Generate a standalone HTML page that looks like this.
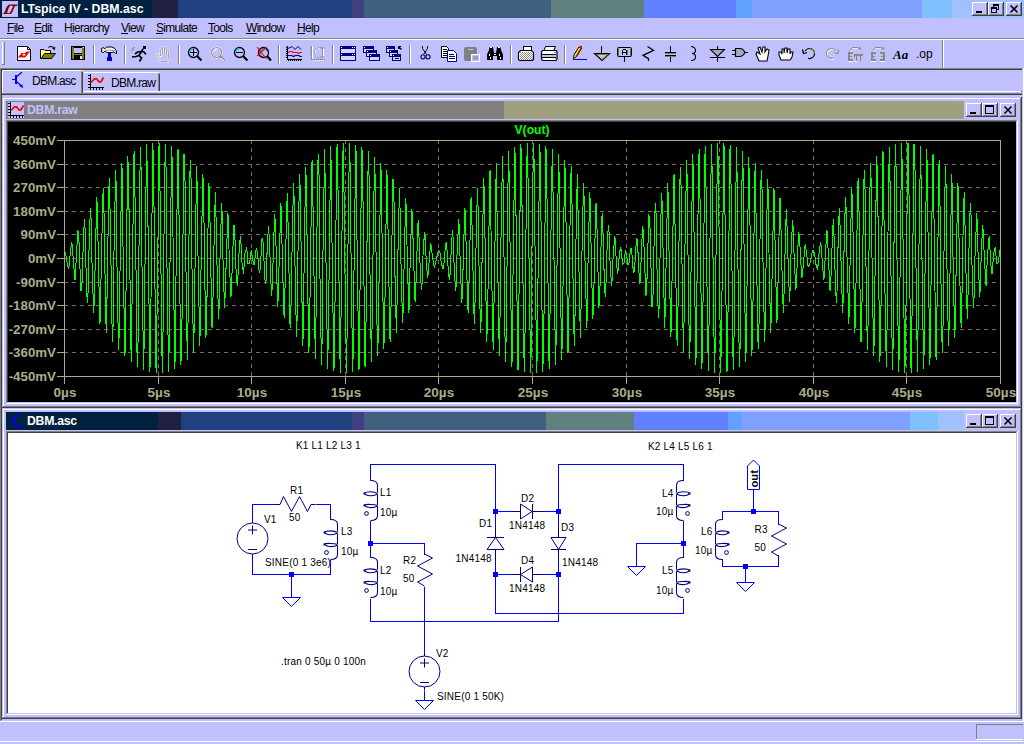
<!DOCTYPE html>
<html><head><meta charset="utf-8"><style>
html,body{margin:0;padding:0;}
body{width:1024px;height:744px;position:relative;overflow:hidden;background:#C0C0FF;font-family:"Liberation Sans",sans-serif;}
u{text-decoration:underline;text-underline-offset:1px;}
svg{overflow:visible}
</style></head><body>
<div style="position:absolute;left:0px;top:0px;width:152px;height:18px;background:#002040;"></div>
<div style="position:absolute;left:152px;top:0px;width:26px;height:18px;background:#202040;"></div>
<div style="position:absolute;left:178px;top:0px;width:174px;height:18px;background:#204080;"></div>
<div style="position:absolute;left:352px;top:0px;width:12px;height:18px;background:#404080;"></div>
<div style="position:absolute;left:364px;top:0px;width:187px;height:18px;background:#406080;"></div>
<div style="position:absolute;left:551px;top:0px;width:93px;height:18px;background:#608080;"></div>
<div style="position:absolute;left:644px;top:0px;width:92px;height:18px;background:#6080FF;"></div>
<div style="position:absolute;left:736px;top:0px;width:16px;height:18px;background:#60A0FF;"></div>
<div style="position:absolute;left:752px;top:0px;width:170px;height:18px;background:#80A0FF;"></div>
<div style="position:absolute;left:922px;top:0px;width:30px;height:18px;background:#80C0FF;"></div>
<div style="position:absolute;left:952px;top:0px;width:72px;height:18px;background:#A0C0FF;"></div>
<svg style="position:absolute;left:2px;top:1px" width="16" height="16" viewBox="0 0 16 16" ><rect x="0" y="0" width="16" height="16" fill="#C0C0FF"/><path d="M0.5 13 L6.5 13 L6.8 12 L5 12 Q6 8 7.5 5.5 Q8.3 4.3 9.8 4.3 L10.2 3.6 L7.6 3.6 Q6 3.6 5 5.5 Q3.6 8 2.2 12 Z" fill="#800000"/><path d="M9.8 3.6 L15.8 3.6 L15 5 L13 5 Q11.5 8.5 10.3 11 Q9.5 12.8 8.2 13 L6.5 13 L7 12.2 Q8.2 11.8 9 9.8 L11.2 5 L9.3 5 Z" fill="#800000"/></svg>
<div style="position:absolute;left:21px;top:3px;font:bold 12.3px/12.3px 'Liberation Sans', sans-serif;color:#FFF;white-space:nowrap;letter-spacing:0px;">LTspice IV - DBM.asc</div>
<div style="position:absolute;left:972px;top:2px;width:16px;height:14px;background:#C0C0FF;"></div>
<div style="position:absolute;left:972px;top:2px;width:15px;height:1px;background:#FFFFFF;"></div>
<div style="position:absolute;left:972px;top:2px;width:1px;height:13px;background:#FFFFFF;"></div>
<div style="position:absolute;left:972px;top:15px;width:16px;height:1px;background:#404040;"></div>
<div style="position:absolute;left:987px;top:2px;width:1px;height:14px;background:#404040;"></div>
<div style="position:absolute;left:973px;top:14px;width:14px;height:1px;background:#808080;"></div>
<div style="position:absolute;left:986px;top:3px;width:1px;height:12px;background:#808080;"></div>
<div style="position:absolute;left:976px;top:11px;width:6px;height:2px;background:#000;"></div>
<div style="position:absolute;left:988px;top:2px;width:16px;height:14px;background:#C0C0FF;"></div>
<div style="position:absolute;left:988px;top:2px;width:15px;height:1px;background:#FFFFFF;"></div>
<div style="position:absolute;left:988px;top:2px;width:1px;height:13px;background:#FFFFFF;"></div>
<div style="position:absolute;left:988px;top:15px;width:16px;height:1px;background:#404040;"></div>
<div style="position:absolute;left:1003px;top:2px;width:1px;height:14px;background:#404040;"></div>
<div style="position:absolute;left:989px;top:14px;width:14px;height:1px;background:#808080;"></div>
<div style="position:absolute;left:1002px;top:3px;width:1px;height:12px;background:#808080;"></div>
<div style="position:absolute;left:993px;top:4px;width:6px;height:6px;background:#000;"></div>
<div style="position:absolute;left:994px;top:6px;width:4px;height:3px;background:#C0C0FF;"></div>
<div style="position:absolute;left:991px;top:7px;width:6px;height:6px;background:#000;"></div>
<div style="position:absolute;left:992px;top:9px;width:4px;height:3px;background:#C0C0FF;"></div>
<div style="position:absolute;left:1006px;top:2px;width:16px;height:14px;background:#C0C0FF;"></div>
<div style="position:absolute;left:1006px;top:2px;width:15px;height:1px;background:#FFFFFF;"></div>
<div style="position:absolute;left:1006px;top:2px;width:1px;height:13px;background:#FFFFFF;"></div>
<div style="position:absolute;left:1006px;top:15px;width:16px;height:1px;background:#404040;"></div>
<div style="position:absolute;left:1021px;top:2px;width:1px;height:14px;background:#404040;"></div>
<div style="position:absolute;left:1007px;top:14px;width:14px;height:1px;background:#808080;"></div>
<div style="position:absolute;left:1020px;top:3px;width:1px;height:12px;background:#808080;"></div>
<svg style="position:absolute;left:1006px;top:2px" width="16" height="14"><path d="M4.5 3.5 L11.5 10.5 M11.5 3.5 L4.5 10.5" stroke="#000" stroke-width="1.6"/></svg>
<div style="position:absolute;left:7px;top:22px;font:normal 12px/12px 'Liberation Sans', sans-serif;color:#000;white-space:nowrap;letter-spacing:-0.7px;"><u>F</u>ile</div>
<div style="position:absolute;left:34px;top:22px;font:normal 12px/12px 'Liberation Sans', sans-serif;color:#000;white-space:nowrap;letter-spacing:-0.7px;"><u>E</u>dit</div>
<div style="position:absolute;left:64px;top:22px;font:normal 12px/12px 'Liberation Sans', sans-serif;color:#000;white-space:nowrap;letter-spacing:-0.7px;">H<u>i</u>erarchy</div>
<div style="position:absolute;left:121px;top:22px;font:normal 12px/12px 'Liberation Sans', sans-serif;color:#000;white-space:nowrap;letter-spacing:-0.7px;"><u>V</u>iew</div>
<div style="position:absolute;left:156px;top:22px;font:normal 12px/12px 'Liberation Sans', sans-serif;color:#000;white-space:nowrap;letter-spacing:-0.7px;"><u>S</u>imulate</div>
<div style="position:absolute;left:208px;top:22px;font:normal 12px/12px 'Liberation Sans', sans-serif;color:#000;white-space:nowrap;letter-spacing:-0.7px;"><u>T</u>ools</div>
<div style="position:absolute;left:246px;top:22px;font:normal 12px/12px 'Liberation Sans', sans-serif;color:#000;white-space:nowrap;letter-spacing:-0.7px;"><u>W</u>indow</div>
<div style="position:absolute;left:297px;top:22px;font:normal 12px/12px 'Liberation Sans', sans-serif;color:#000;white-space:nowrap;letter-spacing:-0.7px;"><u>H</u>elp</div>
<div style="position:absolute;left:0px;top:38px;width:1024px;height:1px;background:#808080;"></div>
<div style="position:absolute;left:0px;top:39px;width:1024px;height:1px;background:#FFFFFF;"></div>
<div style="position:absolute;left:2px;top:42px;width:1px;height:22px;background:#FFF"></div>
<div style="position:absolute;left:4px;top:42px;width:1px;height:23px;background:#808080"></div>
<div style="position:absolute;left:2px;top:64px;width:3px;height:1px;background:#808080"></div>
<svg style="position:absolute;left:17px;top:46px" width="16" height="16" viewBox="0 0 16 16" ><path d="M0.5 0.5 L10.5 0.5 L13.5 3.5 L13.5 14.5 L0.5 14.5 Z" fill="#FFF" stroke="#000" stroke-width="1"/><path d="M10.5 0.5 L10.5 3.5 L13.5 3.5" fill="none" stroke="#000"/><path d="M1 11.5 L4.5 7 L8 7 L9 6 L13 5 L10 9.5 L8 11.5 Z" fill="#FF0000"/><ellipse cx="7" cy="8.7" rx="1.4" ry="1" fill="#FFF"/></svg>
<svg style="position:absolute;left:40px;top:46px" width="16" height="16" viewBox="0 0 16 16" ><path d="M0.5 3.5 L4 3.5 L5 4.5 L10.5 4.5 L10.5 12.5 L0.5 12.5 Z" fill="#FFFF60" stroke="#000"/><path d="M1.5 5 L3 5 L3 8 L1.5 10 Z" fill="#FFF" opacity="0.7"/><path d="M4.5 7.5 L15.5 7.5 L11.5 12.5 L1 12.5 Z" fill="#808000" stroke="#000"/><path d="M8.5 1.5 Q11 -0.5 13.5 1.5" stroke="#000" stroke-width="1.2" fill="none"/><path d="M12 2 L15.5 1 L14.5 4.5 Z" fill="#000"/></svg>
<svg style="position:absolute;left:71px;top:46px" width="16" height="16" viewBox="0 0 16 16" ><rect x="0.5" y="0.5" width="13" height="13" fill="#808000" stroke="#000"/><rect x="3" y="1" width="8" height="6" fill="#C0C0FF" stroke="#000" stroke-width="0"/><rect x="3" y="1" width="8" height="1" fill="#000"/><rect x="3" y="7" width="8" height="1" fill="#000"/><rect x="3" y="9" width="8" height="4" fill="#000"/><rect x="9" y="10" width="2" height="3" fill="#E0E0FF"/><rect x="12" y="1" width="1" height="1" fill="#FFF"/></svg>
<svg style="position:absolute;left:101px;top:46px" width="16" height="16" viewBox="0 0 16 16" ><path d="M0.5 2.5 L2.5 1.5 L3.5 3 L5.5 1 L11 1 Q14.5 2 15.5 5 L15.5 8 L14 6.5 Q12.5 5.5 10 6.5 L6 6.5 L4 5 L2.5 6.5 L0.5 6 Z" fill="#F0F0F0" stroke="#000" stroke-width="1"/><path d="M4 4 L14 4.5" stroke="#A0A0A0" stroke-width="1"/><rect x="7" y="7" width="3" height="4" fill="#0000A0"/><rect x="6" y="11" width="5" height="4" fill="#0000FF"/><rect x="8" y="11" width="2" height="4" fill="#0000A0"/></svg>
<svg style="position:absolute;left:131px;top:46px" width="16" height="16" viewBox="0 0 16 16" ><rect x="12" y="0" width="3" height="3" fill="#000"/><path d="M12 3 L8 9.5 M10.5 5.5 L13 6 L15 8.5 M10.5 5.5 L6.5 6 L4 8 M8 9.5 L5 10.5 L1 11 M8 9.5 L10.5 12 L8.5 15.5" stroke="#000" stroke-width="1.7" fill="none"/><path d="M1 2.5 L4 1.5 M0 4.5 L3 3.5" stroke="#808080" stroke-width="0.9"/></svg>
<svg style="position:absolute;left:155px;top:46px" width="16" height="16" viewBox="0 0 16 16" ><path d="M5.5 15.5 L2.5 10.5 L1.5 8.5 L3.5 8 L5.5 10 L5.5 3 L7.5 2.5 L7.5 8 L7.5 1 L9.5 1 L9.5 8 L9.5 2 L11.5 2.5 L11.5 8 L11.5 4 L13.5 4.5 L13.5 12 L12.5 15.5 Z" fill="#C0C0FF" stroke="#FFF" stroke-width="1.6"/><path d="M5.5 15.5 L2.5 10.5 L1.5 8.5 L3.5 8 L5.5 10 L5.5 3 L7.5 2.5 L7.5 8 L7.5 1 L9.5 1 L9.5 8 L9.5 2 L11.5 2.5 L11.5 8 L11.5 4 L13.5 4.5 L13.5 12 L12.5 15.5 Z" fill="none" stroke="#A0A0A0" stroke-width="0.9"/></svg>
<svg style="position:absolute;left:187px;top:46px" width="16" height="16" viewBox="0 0 16 16" ><circle cx="6.5" cy="6.5" r="5" fill="#C0C0FF" stroke="#000" stroke-width="1.3"/><path d="M10 10 L14.5 14.5" stroke="#000" stroke-width="2.2"/><path d="M2.7 6 Q3 3 6 2.7" stroke="#00C0C0" stroke-width="1.2" fill="none"/><rect x="3" y="6" width="7" height="1" fill="#000"/><rect x="6" y="3" width="1" height="7" fill="#000"/></svg>
<svg style="position:absolute;left:210px;top:46px" width="16" height="16" viewBox="0 0 16 16" ><circle cx="6.5" cy="6.5" r="5" fill="#C0C0FF" stroke="#FFF" stroke-width="2"/><circle cx="6.5" cy="6.5" r="5" fill="none" stroke="#909090" stroke-width="1.2"/><path d="M10 10 L14.5 14.5" stroke="#909090" stroke-width="2.2"/><path d="M11 12 L14 15" stroke="#FFF" stroke-width="1"/><path d="M3.5 6 Q4 3.5 6.5 3.5" stroke="#FFF" fill="none"/></svg>
<svg style="position:absolute;left:233px;top:46px" width="16" height="16" viewBox="0 0 16 16" ><circle cx="6.5" cy="6.5" r="5" fill="#C0C0FF" stroke="#000" stroke-width="1.3"/><path d="M10 10 L14.5 14.5" stroke="#000" stroke-width="2.2"/><path d="M2.7 6 Q3 3 6 2.7" stroke="#00C0C0" stroke-width="1.2" fill="none"/><rect x="3" y="6" width="7" height="1" fill="#000"/></svg>
<svg style="position:absolute;left:256px;top:46px" width="16" height="16" viewBox="0 0 16 16" ><circle cx="7.5" cy="6.5" r="5" fill="#40C0E0" stroke="#000" stroke-width="1.3"/><circle cx="8.5" cy="7.5" r="3" fill="#C0C0FF"/><path d="M11 10 L15 14.5" stroke="#000" stroke-width="2.2"/><path d="M1 1 L10.5 13 M10.5 1 L1 10" stroke="#FF0000" stroke-width="1.2"/></svg>
<svg style="position:absolute;left:286px;top:46px" width="16" height="16" viewBox="0 0 16 16" ><rect x="1" y="0" width="1" height="14" fill="#000"/><rect x="1" y="13" width="15" height="1" fill="#000"/><rect x="0" y="1" width="1" height="1" fill="#000"/><rect x="0" y="3" width="1" height="1" fill="#000"/><rect x="0" y="5" width="1" height="1" fill="#000"/><rect x="0" y="7" width="1" height="1" fill="#000"/><rect x="0" y="9" width="1" height="1" fill="#000"/><rect x="0" y="11" width="1" height="1" fill="#000"/><rect x="2" y="14" width="1" height="1" fill="#000"/><rect x="4" y="14" width="1" height="1" fill="#000"/><rect x="6" y="14" width="1" height="1" fill="#000"/><rect x="8" y="14" width="1" height="1" fill="#000"/><rect x="10" y="14" width="1" height="1" fill="#000"/><rect x="12" y="14" width="1" height="1" fill="#000"/><rect x="14" y="14" width="1" height="1" fill="#000"/><polyline points="2,2.5 6,0.5 9,3.5 12,0.5 15,3.5" stroke="#000080" fill="none"/><polyline points="2,6.5 4,5.5 6,5.5 7,6.5 11,6.5 12,7.5 14,6.5 16,6.5" stroke="#FF0000" stroke-width="1.2" fill="none"/><polyline points="2,9.5 6,9.5 7,10.5 8,10.5 9,9.5 13,9.5 14,10.5 16,10.5" stroke="#000080" stroke-width="1.2" fill="none"/></svg>
<svg style="position:absolute;left:309px;top:46px" width="16" height="16" viewBox="0 0 16 16" ><rect x="2" y="0" width="1" height="14" fill="#909090"/><rect x="2" y="13" width="14" height="1" fill="#909090"/><rect x="3" y="0" width="1" height="13" fill="#FFF"/><rect x="1" y="1" width="1" height="1" fill="#909090"/><rect x="1" y="3" width="1" height="1" fill="#909090"/><rect x="1" y="5" width="1" height="1" fill="#909090"/><rect x="1" y="7" width="1" height="1" fill="#909090"/><rect x="1" y="9" width="1" height="1" fill="#909090"/><rect x="1" y="11" width="1" height="1" fill="#909090"/><rect x="4" y="14" width="1" height="1" fill="#FFF"/><rect x="6" y="14" width="1" height="1" fill="#FFF"/><rect x="8" y="14" width="1" height="1" fill="#FFF"/><rect x="10" y="14" width="1" height="1" fill="#FFF"/><rect x="12" y="14" width="1" height="1" fill="#FFF"/><rect x="14" y="14" width="1" height="1" fill="#FFF"/><path d="M12 1.5 Q5.5 1.5 5.5 7 Q5.5 12 12 12" stroke="#909090" stroke-dasharray="1.5 1" fill="none"/><path d="M6.5 7 Q6.5 2.5 12 2.5" stroke="#FFF" stroke-dasharray="1.5 1" fill="none"/><rect x="13" y="1" width="1" height="11" fill="#909090"/><rect x="14" y="2" width="1" height="10" fill="#FFF"/><path d="M11.5 3 L13.5 1 L15.5 3 M11.5 10 L13.5 12 L15.5 10" stroke="#909090" fill="none"/></svg>
<svg style="position:absolute;left:340px;top:46px" width="16" height="16" viewBox="0 0 16 16" ><rect x="0" y="0" width="16" height="3" fill="#000080"/><rect x="0" y="0" width="1" height="8" fill="#000080"/><rect x="15" y="0" width="1" height="8" fill="#000080"/><rect x="0" y="7" width="16" height="1" fill="#000080"/><rect x="1" y="3" width="14" height="4" fill="#D4D4FF"/><rect x="1" y="1" width="1" height="1" fill="#FFF"/><rect x="12" y="1" width="1" height="1" fill="#FFF"/><rect x="14" y="1" width="1" height="1" fill="#FFF"/><rect x="0" y="7" width="16" height="3" fill="#000080"/><rect x="0" y="7" width="1" height="8" fill="#000080"/><rect x="15" y="7" width="1" height="8" fill="#000080"/><rect x="0" y="14" width="16" height="1" fill="#000080"/><rect x="1" y="10" width="14" height="4" fill="#D4D4FF"/><rect x="1" y="8" width="1" height="1" fill="#FFF"/><rect x="12" y="8" width="1" height="1" fill="#FFF"/><rect x="14" y="8" width="1" height="1" fill="#FFF"/><rect x="0" y="14" width="16" height="1" fill="#000080"/></svg>
<svg style="position:absolute;left:363px;top:46px" width="16" height="16" viewBox="0 0 16 16" ><rect x="0" y="0" width="11" height="3" fill="#000080"/><rect x="0" y="0" width="1" height="7" fill="#000080"/><rect x="10" y="0" width="1" height="7" fill="#000080"/><rect x="0" y="6" width="11" height="1" fill="#000080"/><rect x="1" y="3" width="9" height="3" fill="#D4D4FF"/><rect x="1" y="1" width="1" height="1" fill="#FFF"/><rect x="3" y="4" width="11" height="3" fill="#000080"/><rect x="3" y="4" width="1" height="7" fill="#000080"/><rect x="13" y="4" width="1" height="7" fill="#000080"/><rect x="3" y="10" width="11" height="1" fill="#000080"/><rect x="4" y="7" width="9" height="3" fill="#D4D4FF"/><rect x="4" y="5" width="1" height="1" fill="#FFF"/><rect x="6" y="8" width="11" height="3" fill="#000080"/><rect x="6" y="8" width="1" height="7" fill="#000080"/><rect x="16" y="8" width="1" height="7" fill="#000080"/><rect x="6" y="14" width="11" height="1" fill="#000080"/><rect x="7" y="11" width="9" height="3" fill="#D4D4FF"/><rect x="7" y="9" width="1" height="1" fill="#FFF"/></svg>
<svg style="position:absolute;left:386px;top:46px" width="16" height="16" viewBox="0 0 16 16" ><rect x="0" y="0" width="9" height="3" fill="#000080"/><rect x="0" y="0" width="1" height="7" fill="#000080"/><rect x="8" y="0" width="1" height="7" fill="#000080"/><rect x="0" y="6" width="9" height="1" fill="#000080"/><rect x="1" y="3" width="7" height="3" fill="#D4D4FF"/><rect x="1" y="1" width="1" height="1" fill="#FFF"/><rect x="3" y="4" width="9" height="3" fill="#000080"/><rect x="3" y="4" width="1" height="7" fill="#000080"/><rect x="11" y="4" width="1" height="7" fill="#000080"/><rect x="3" y="10" width="9" height="1" fill="#000080"/><rect x="4" y="7" width="7" height="3" fill="#D4D4FF"/><rect x="4" y="5" width="1" height="1" fill="#FFF"/><rect x="6" y="8" width="9" height="3" fill="#000080"/><rect x="6" y="8" width="1" height="7" fill="#000080"/><rect x="14" y="8" width="1" height="7" fill="#000080"/><rect x="6" y="14" width="9" height="1" fill="#000080"/><rect x="7" y="11" width="7" height="3" fill="#D4D4FF"/><rect x="7" y="9" width="1" height="1" fill="#FFF"/><rect x="9" y="12" width="4" height="1" fill="#000"/><path d="M12.5 0.5 L15.5 3.5 M12.5 0.5 L15 0.5 M12.5 0.5 L12.5 3" stroke="#000" stroke-width="1.2" fill="none"/></svg>
<svg style="position:absolute;left:418px;top:46px" width="16" height="16" viewBox="0 0 16 16" ><path d="M4.5 0 L4.5 2.5 L8.5 8.5 M9.5 0 L9.5 2.5 L5.5 8.5" stroke="#000" stroke-width="1" fill="none"/><circle cx="5" cy="10.8" r="2.1" fill="none" stroke="#000080" stroke-width="1.1"/><circle cx="10" cy="10.8" r="2.1" fill="none" stroke="#000080" stroke-width="1.1"/></svg>
<svg style="position:absolute;left:441px;top:46px" width="16" height="16" viewBox="0 0 16 16" ><path d="M0.5 0.5 L5.5 0.5 L7.5 2.5 L7.5 11.5 L0.5 11.5 Z" fill="#FFF" stroke="#000"/><rect x="2" y="3" width="4" height="1" fill="#000"/><rect x="2" y="5" width="4" height="1" fill="#000"/><rect x="2" y="7" width="4" height="1" fill="#000"/><rect x="2" y="9" width="4" height="1" fill="#000"/><path d="M6.5 4.5 L12.5 4.5 L15.5 7.5 L15.5 15.5 L6.5 15.5 Z" fill="#FFF" stroke="#000080"/><rect x="8" y="8" width="5" height="1" fill="#000080"/><rect x="8" y="10" width="6" height="1" fill="#000080"/><rect x="8" y="12" width="6" height="1" fill="#000080"/></svg>
<svg style="position:absolute;left:464px;top:46px" width="16" height="16" viewBox="0 0 16 16" ><rect x="0.5" y="1.5" width="12" height="13" rx="1" fill="#808080" stroke="#808080"/><rect x="4" y="3" width="5" height="1" fill="#C0C0FF"/><rect x="7.5" y="8.5" width="8" height="7" fill="#C0C0FF" stroke="#FFF"/><path d="M9 11 L14 11 M9 13 L14 13" stroke="#808080"/></svg>
<svg style="position:absolute;left:487px;top:46px" width="16" height="16" viewBox="0 0 16 16" ><path d="M0 14 L0 8.5 L2 4 L2.5 1 L6 1 L6.5 4 L7 7 L9 7 L9.5 4 L10 1 L13.5 1 L14 4 L16 8.5 L16 14 L10 14 L10 10 L6 10 L6 14 Z" fill="#000"/><rect x="3" y="1" width="2" height="1" fill="#FFF"/><rect x="11" y="1" width="2" height="1" fill="#FFF"/><rect x="2" y="8" width="1" height="2" fill="#FFF"/><rect x="3" y="11" width="1" height="2" fill="#FFF"/><rect x="12" y="8" width="1" height="2" fill="#FFF"/><rect x="13" y="11" width="1" height="2" fill="#FFF"/><rect x="7" y="8" width="2" height="1" fill="#FFF"/></svg>
<svg style="position:absolute;left:518px;top:46px" width="16" height="16" viewBox="0 0 16 16" ><rect x="5.5" y="0.5" width="8" height="4" fill="#FFF" stroke="#000"/><path d="M2.5 4.5 L13.5 4.5 L15.5 6.5 L15.5 13.5 L14.5 14.5 L1.5 14.5 L0.5 13.5 L0.5 6.5 Z" fill="#FFF" stroke="#000" stroke-width="1.2"/><rect x="2" y="6" width="1" height="1" fill="#909090"/><rect x="4" y="6" width="1" height="1" fill="#909090"/><rect x="6" y="6" width="1" height="1" fill="#909090"/><rect x="8" y="6" width="1" height="1" fill="#909090"/><rect x="10" y="6" width="1" height="1" fill="#909090"/><rect x="12" y="6" width="1" height="1" fill="#909090"/><rect x="14" y="6" width="1" height="1" fill="#909090"/><rect x="3" y="7" width="1" height="1" fill="#909090"/><rect x="5" y="7" width="1" height="1" fill="#909090"/><rect x="7" y="7" width="1" height="1" fill="#909090"/><rect x="9" y="7" width="1" height="1" fill="#909090"/><rect x="11" y="7" width="1" height="1" fill="#909090"/><rect x="13" y="7" width="1" height="1" fill="#909090"/><rect x="2" y="8" width="1" height="1" fill="#909090"/><rect x="4" y="8" width="1" height="1" fill="#909090"/><rect x="6" y="8" width="1" height="1" fill="#909090"/><rect x="8" y="8" width="1" height="1" fill="#909090"/><rect x="10" y="8" width="1" height="1" fill="#909090"/><rect x="12" y="8" width="1" height="1" fill="#909090"/><rect x="14" y="8" width="1" height="1" fill="#909090"/><rect x="3" y="9" width="1" height="1" fill="#909090"/><rect x="5" y="9" width="1" height="1" fill="#909090"/><rect x="7" y="9" width="1" height="1" fill="#909090"/><rect x="9" y="9" width="1" height="1" fill="#909090"/><rect x="11" y="9" width="1" height="1" fill="#909090"/><rect x="13" y="9" width="1" height="1" fill="#909090"/><rect x="2" y="10" width="1" height="1" fill="#909090"/><rect x="4" y="10" width="1" height="1" fill="#909090"/><rect x="6" y="10" width="1" height="1" fill="#909090"/><rect x="8" y="10" width="1" height="1" fill="#909090"/><rect x="10" y="10" width="1" height="1" fill="#909090"/><rect x="12" y="10" width="1" height="1" fill="#909090"/><rect x="14" y="10" width="1" height="1" fill="#909090"/><rect x="3" y="11" width="1" height="1" fill="#909090"/><rect x="5" y="11" width="1" height="1" fill="#909090"/><rect x="7" y="11" width="1" height="1" fill="#909090"/><rect x="9" y="11" width="1" height="1" fill="#909090"/><rect x="11" y="11" width="1" height="1" fill="#909090"/><rect x="13" y="11" width="1" height="1" fill="#909090"/><rect x="2" y="12" width="1" height="1" fill="#909090"/><rect x="4" y="12" width="1" height="1" fill="#909090"/><rect x="6" y="12" width="1" height="1" fill="#909090"/><rect x="8" y="12" width="1" height="1" fill="#909090"/><rect x="10" y="12" width="1" height="1" fill="#909090"/><rect x="12" y="12" width="1" height="1" fill="#909090"/><rect x="14" y="12" width="1" height="1" fill="#909090"/><rect x="3" y="13" width="1" height="1" fill="#909090"/><rect x="5" y="13" width="1" height="1" fill="#909090"/><rect x="7" y="13" width="1" height="1" fill="#909090"/><rect x="9" y="13" width="1" height="1" fill="#909090"/><rect x="11" y="13" width="1" height="1" fill="#909090"/><rect x="13" y="13" width="1" height="1" fill="#909090"/></svg>
<svg style="position:absolute;left:541px;top:46px" width="16" height="16" viewBox="0 0 16 16" ><path d="M4.5 0.5 L14.5 0.5 L13 4.5 L3 4.5 Z" fill="#FFF" stroke="#000"/><path d="M1.5 4.5 L15.5 4.5 L16 6 L16 13 L15 14.5 L1.5 14.5 L0.5 13 L0.5 6 Z" fill="#FFF" stroke="#000" stroke-width="1.2"/><rect x="1" y="8" width="14" height="1" fill="#000"/><rect x="1" y="11" width="14" height="1" fill="#000"/><rect x="1" y="9" width="14" height="2" fill="#C0C0FF"/><rect x="8" y="10" width="3" height="1" fill="#E0E000"/><rect x="13" y="6" width="2" height="1" fill="#808080"/><rect x="14" y="12" width="1" height="1" fill="#808080"/></svg>
<svg style="position:absolute;left:572px;top:46px" width="16" height="16" viewBox="0 0 16 16" ><rect x="1" y="13" width="14" height="1" fill="#0000FF"/><path d="M1.5 12.5 L2 9 L7 0.8 L9.6 2.2 L4.6 10.6 Z" fill="#FFFF00" stroke="#000" stroke-width="1"/><path d="M4 10 L8.8 2" stroke="#FF0000" stroke-width="0.9"/><rect x="8" y="0" width="2" height="2" fill="#FF0000"/></svg>
<svg style="position:absolute;left:594px;top:46px" width="16" height="16" viewBox="0 0 16 16" ><rect x="7" y="0" width="1" height="7" fill="#000"/><path d="M0.5 7.5 L15.5 7.5 L8 14.5 Z" stroke="#000" stroke-width="1.2" fill="none"/><path d="M2 8.5 L14 8.5 L8 13.5" stroke="#808000" stroke-width="1" fill="none"/></svg>
<svg style="position:absolute;left:617px;top:46px" width="16" height="16" viewBox="0 0 16 16" ><rect x="0.5" y="1.5" width="14" height="9" rx="1" fill="#C0C0FF" stroke="#000"/><rect x="1" y="2" width="1" height="8" fill="#808000"/><rect x="13" y="2" width="1" height="8" fill="#808000"/><rect x="7" y="11" width="1" height="5" fill="#000"/><rect x="5" y="4" width="1" height="5" fill="#000"/><rect x="9" y="4" width="1" height="5" fill="#000"/><rect x="6" y="3" width="3" height="1" fill="#000"/><rect x="6" y="6" width="3" height="1" fill="#000"/><rect x="10" y="4" width="1" height="5" fill="#808000"/></svg>
<svg style="position:absolute;left:640px;top:46px" width="16" height="16" viewBox="0 0 16 16" ><polyline points="7.5,0.5 13.5,4.3 3,9.3 8.5,12.6 8.5,15" stroke="#000" stroke-width="1.3" fill="none"/></svg>
<svg style="position:absolute;left:664px;top:46px" width="16" height="16" viewBox="0 0 16 16" ><rect x="6" y="0" width="1" height="6" fill="#000"/><rect x="6" y="10" width="1" height="6" fill="#000"/><rect x="1" y="6" width="11" height="1" fill="#000"/><rect x="1" y="9" width="11" height="1" fill="#000"/><rect x="1" y="7" width="11" height="1" fill="#808060"/><rect x="1" y="10" width="11" height="1" fill="#808060"/></svg>
<svg style="position:absolute;left:686px;top:46px" width="16" height="16" viewBox="0 0 16 16" ><path d="M5 0.5 Q9.5 1 9.5 4.5 Q9.5 7.5 6 7.5 Q9.5 7.5 9.5 11 Q9.5 14.5 5 14.5" stroke="#000" stroke-width="1.1" fill="none"/></svg>
<svg style="position:absolute;left:710px;top:46px" width="16" height="16" viewBox="0 0 16 16" ><rect x="7" y="0" width="1" height="3" fill="#000"/><rect x="7" y="11" width="1" height="5" fill="#000"/><rect x="0" y="11" width="15" height="1" fill="#000"/><path d="M0.5 3.5 L14.5 3.5 L7.5 10.5 Z" stroke="#000" stroke-width="1.1" fill="#A8A8B8"/></svg>
<svg style="position:absolute;left:732px;top:46px" width="16" height="16" viewBox="0 0 16 16" ><path d="M3.5 2.5 L8.5 2.5 Q10.5 2.5 12.5 5.5 L12.5 7.5 Q10.5 10.5 8.5 10.5 L3.5 10.5 Z" fill="#A8A8B8" stroke="#000" stroke-width="1.2"/><rect x="0" y="4" width="3" height="1" fill="#000"/><rect x="0" y="8" width="3" height="1" fill="#000"/><rect x="13" y="6" width="3" height="1" fill="#000"/></svg>
<svg style="position:absolute;left:755px;top:46px" width="16" height="16" viewBox="0 0 16 16" ><path d="M4 15 L1 8 L2 6 L5 8 L3 2 L5 1 L7 6 L8 1 L10 1 L10 6 L12 3 L14 4 L13 10 L12 15 Z" fill="#FFF" stroke="#000" stroke-width="1.1"/></svg>
<svg style="position:absolute;left:778px;top:46px" width="16" height="16" viewBox="0 0 16 16" ><path d="M3 14 L1 9 L1 6 L3 6 L4 8 L4 3 L6 3 L6 7 L7 2 L9 2 L9 7 L10 3 L12 3 L12 8 L13 6 L15 6 L14 11 L12 14 Z" fill="#FFF" stroke="#000" stroke-width="1.1"/></svg>
<svg style="position:absolute;left:801px;top:46px" width="16" height="16" viewBox="0 0 16 16" ><path d="M4.2 5 A5 5 0 1 1 7 12.3" stroke="#000" stroke-width="1.2" fill="none"/><path d="M8.5 2.5 A5 5 0 0 1 13.5 7.5" stroke="#808000" stroke-width="1.2" fill="none"/><polyline points="1.5,3.5 2.5,7.5 6,6.5" stroke="#000" stroke-width="1.3" fill="none"/></svg>
<svg style="position:absolute;left:824px;top:46px" width="16" height="16" viewBox="0 0 16 16" ><path d="M11.8 5 A5 5 0 1 0 9 12.3" stroke="#FFF" stroke-width="1.2" fill="none" transform="translate(0.8,0.8)"/><path d="M11.8 5 A5 5 0 1 0 9 12.3" stroke="#909090" stroke-width="1.2" fill="none"/><polyline points="14.5,3.5 13.5,7.5 10,6.5" stroke="#909090" stroke-width="1.3" fill="none"/></svg>
<svg style="position:absolute;left:847px;top:46px" width="16" height="16" viewBox="0 0 16 16" ><polyline points="2.5,5.5 5.5,1.5 11,1.5 13,3.5" stroke="#FFF" fill="none" transform="translate(0.7,0.7)"/><polyline points="2.5,5.5 5.5,1.5 11,1.5 13,3.5" stroke="#888888" fill="none"/><path d="M11 2.5 L14.5 4 L13 0.5 Z" fill="#888888"/><rect x="1" y="6" width="2" height="9" fill="#888888"/><rect x="3" y="6" width="3" height="2" fill="#888888"/><rect x="3" y="10" width="2" height="1" fill="#888888"/><rect x="3" y="13" width="3" height="2" fill="#888888"/><rect x="1" y="15" width="5" height="1" fill="#FFF"/><rect x="7" y="8" width="9" height="2" fill="#888888"/><rect x="9" y="10" width="1" height="5" fill="#888888"/><rect x="13" y="10" width="1" height="5" fill="#888888"/><rect x="7" y="10" width="1" height="2" fill="#888888"/><rect x="8" y="15" width="2" height="1" fill="#FFF"/></svg>
<svg style="position:absolute;left:870px;top:46px" width="16" height="16" viewBox="0 0 16 16" ><polyline points="2.5,5.5 5.5,1.5 11,1.5 13,3.5" stroke="#FFF" fill="none" transform="translate(0.7,0.7)"/><polyline points="2.5,5.5 5.5,1.5 11,1.5 13,3.5" stroke="#888888" fill="none"/><path d="M11 2.5 L14.5 4 L13 0.5 Z" fill="#888888"/><rect x="1" y="6" width="2" height="9" fill="#888888"/><rect x="3" y="6" width="3" height="2" fill="#888888"/><rect x="3" y="10" width="2" height="1" fill="#888888"/><rect x="3" y="13" width="3" height="2" fill="#888888"/><rect x="1" y="15" width="5" height="1" fill="#FFF"/><rect x="13" y="6" width="2" height="9" fill="#888888"/><rect x="10" y="6" width="3" height="2" fill="#888888"/><rect x="11" y="10" width="2" height="1" fill="#888888"/><rect x="10" y="13" width="3" height="2" fill="#888888"/><rect x="10" y="15" width="5" height="1" fill="#FFF"/></svg>
<svg style="position:absolute;left:893px;top:46px" width="16" height="16" viewBox="0 0 16 16" ><text x="0" y="13" font-family="Liberation Serif" font-style="italic" font-weight="bold" font-size="13" fill="#000">Aa</text></svg>
<svg style="position:absolute;left:916px;top:46px" width="16" height="16" viewBox="0 0 16 16" ><text x="0" y="12" font-family="Liberation Sans" font-size="12" fill="#000">.op</text></svg>
<div style="position:absolute;left:62px;top:45px;width:1px;height:19px;background:#808080"></div><div style="position:absolute;left:63px;top:45px;width:1px;height:19px;background:#FFF"></div>
<div style="position:absolute;left:93px;top:45px;width:1px;height:19px;background:#808080"></div><div style="position:absolute;left:94px;top:45px;width:1px;height:19px;background:#FFF"></div>
<div style="position:absolute;left:124px;top:45px;width:1px;height:19px;background:#808080"></div><div style="position:absolute;left:125px;top:45px;width:1px;height:19px;background:#FFF"></div>
<div style="position:absolute;left:178px;top:45px;width:1px;height:19px;background:#808080"></div><div style="position:absolute;left:179px;top:45px;width:1px;height:19px;background:#FFF"></div>
<div style="position:absolute;left:278px;top:45px;width:1px;height:19px;background:#808080"></div><div style="position:absolute;left:279px;top:45px;width:1px;height:19px;background:#FFF"></div>
<div style="position:absolute;left:332px;top:45px;width:1px;height:19px;background:#808080"></div><div style="position:absolute;left:333px;top:45px;width:1px;height:19px;background:#FFF"></div>
<div style="position:absolute;left:409px;top:45px;width:1px;height:19px;background:#808080"></div><div style="position:absolute;left:410px;top:45px;width:1px;height:19px;background:#FFF"></div>
<div style="position:absolute;left:510px;top:45px;width:1px;height:19px;background:#808080"></div><div style="position:absolute;left:511px;top:45px;width:1px;height:19px;background:#FFF"></div>
<div style="position:absolute;left:564px;top:45px;width:1px;height:19px;background:#808080"></div><div style="position:absolute;left:565px;top:45px;width:1px;height:19px;background:#FFF"></div>
<div style="position:absolute;left:942px;top:40px;width:1px;height:28px;background:#808080"></div>
<div style="position:absolute;left:943px;top:40px;width:1px;height:28px;background:#FFF"></div>
<div style="position:absolute;left:0px;top:68px;width:1023px;height:1px;background:#808080;"></div>
<div style="position:absolute;left:1px;top:69px;width:1021px;height:1px;background:#404040;"></div>
<div style="position:absolute;left:0px;top:68px;width:1px;height:653px;background:#808080;"></div>
<div style="position:absolute;left:1px;top:69px;width:1px;height:651px;background:#404040;"></div>
<div style="position:absolute;left:1023px;top:68px;width:1px;height:653px;background:#FFFFFF;"></div>
<div style="position:absolute;left:1022px;top:69px;width:1px;height:651px;background:#C0C0FF;"></div>
<div style="position:absolute;left:2px;top:91px;width:1019px;height:1px;background:#FFF"></div>
<div style="position:absolute;left:1021px;top:91px;width:1px;height:1px;background:#404040"></div>
<div style="position:absolute;left:84px;top:72px;width:75px;height:1px;background:#FFF"></div>
<div style="position:absolute;left:158px;top:73px;width:1px;height:18px;background:#808080"></div>
<div style="position:absolute;left:159px;top:74px;width:1px;height:17px;background:#404040"></div>
<div style="position:absolute;left:2px;top:70px;width:81px;height:23px;background:#C0C0FF"></div>
<div style="position:absolute;left:3px;top:70px;width:79px;height:1px;background:#FFF"></div>
<div style="position:absolute;left:2px;top:71px;width:1px;height:22px;background:#FFF"></div>
<div style="position:absolute;left:81px;top:71px;width:1px;height:22px;background:#808080"></div>
<div style="position:absolute;left:82px;top:72px;width:1px;height:21px;background:#404040"></div>
<svg style="position:absolute;left:10px;top:72px" width="16" height="16" viewBox="0 0 16 16" ><rect x="2" y="7" width="3" height="1" fill="#0000FF"/><rect x="5" y="3" width="2" height="9" fill="#0000FF"/><path d="M7 4.5 L12 0 M7 10 L13 15.5" stroke="#0000FF" stroke-width="1.1" fill="none"/><path d="M9 13.8 L12.5 12.2 L12 15.5 Z" fill="#0000FF"/></svg>
<svg style="position:absolute;left:88px;top:74px" width="16" height="16" viewBox="0 0 16 16" ><rect x="0" y="0" width="16" height="16" fill="#C0C0FF"/><rect x="2" y="0" width="1" height="16" fill="#000"/><rect x="0" y="13" width="16" height="1" fill="#000"/><rect x="0" y="1" width="2" height="1" fill="#000"/><rect x="0" y="4" width="2" height="1" fill="#000"/><rect x="0" y="7" width="2" height="1" fill="#000"/><rect x="0" y="10" width="2" height="1" fill="#000"/><rect x="5" y="14" width="1" height="2" fill="#000"/><rect x="8" y="14" width="1" height="2" fill="#000"/><rect x="11" y="14" width="1" height="2" fill="#000"/><rect x="14" y="14" width="1" height="2" fill="#000"/><polyline points="3,8.5 6.5,4.8 8.5,4.8 11,7.8 13,7.8 15.5,3.5" stroke="#FF0000" stroke-width="1.7" fill="none"/></svg>
<div style="position:absolute;left:32px;top:75px;font:normal 12px/12px 'Liberation Sans', sans-serif;letter-spacing:-0.75px;white-space:nowrap">DBM.asc</div>
<div style="position:absolute;left:111px;top:77px;font:normal 12px/12px 'Liberation Sans', sans-serif;letter-spacing:-0.75px;white-space:nowrap">DBM.raw</div>
<div style="position:absolute;left:2px;top:93px;width:1020px;height:1px;background:#808080;"></div>
<div style="position:absolute;left:2px;top:94px;width:1020px;height:1px;background:#404040;"></div>
<div style="position:absolute;left:0px;top:721px;width:1024px;height:1px;background:#FFFFFF;"></div>
<div style="position:absolute;left:2px;top:97px;width:1020px;height:311px;background:#C0C0FF;"></div>
<div style="position:absolute;left:2px;top:97px;width:1019px;height:1px;background:#C0C0FF;"></div>
<div style="position:absolute;left:2px;top:97px;width:1px;height:310px;background:#C0C0FF;"></div>
<div style="position:absolute;left:3px;top:98px;width:1017px;height:1px;background:#FFFFFF;"></div>
<div style="position:absolute;left:3px;top:98px;width:1px;height:308px;background:#FFFFFF;"></div>
<div style="position:absolute;left:2px;top:407px;width:1020px;height:1px;background:#404040;"></div>
<div style="position:absolute;left:1021px;top:97px;width:1px;height:311px;background:#404040;"></div>
<div style="position:absolute;left:3px;top:406px;width:1018px;height:1px;background:#808080;"></div>
<div style="position:absolute;left:1020px;top:98px;width:1px;height:309px;background:#808080;"></div>
<div style="position:absolute;left:6px;top:101px;width:498px;height:18px;background:#808080;"></div>
<div style="position:absolute;left:504px;top:101px;width:460px;height:18px;background:#A0A080;"></div>
<svg style="position:absolute;left:8px;top:102px" width="16" height="16" viewBox="0 0 16 16" ><rect x="0" y="0" width="16" height="16" fill="#C0C0FF"/><rect x="2" y="0" width="1" height="16" fill="#000"/><rect x="0" y="13" width="16" height="1" fill="#000"/><rect x="0" y="1" width="2" height="1" fill="#000"/><rect x="0" y="4" width="2" height="1" fill="#000"/><rect x="0" y="7" width="2" height="1" fill="#000"/><rect x="0" y="10" width="2" height="1" fill="#000"/><rect x="5" y="14" width="1" height="2" fill="#000"/><rect x="8" y="14" width="1" height="2" fill="#000"/><rect x="11" y="14" width="1" height="2" fill="#000"/><rect x="14" y="14" width="1" height="2" fill="#000"/><polyline points="3,8.5 6.5,4.8 8.5,4.8 11,7.8 13,7.8 15.5,3.5" stroke="#FF0000" stroke-width="1.7" fill="none"/></svg>
<div style="position:absolute;left:27px;top:104px;font:bold 12.3px/12.3px 'Liberation Sans', sans-serif;color:#C0C0FF;white-space:nowrap;letter-spacing:-0.3px;">DBM.raw</div>
<div style="position:absolute;left:966px;top:103px;width:16px;height:14px;background:#C0C0FF;"></div>
<div style="position:absolute;left:966px;top:103px;width:15px;height:1px;background:#FFFFFF;"></div>
<div style="position:absolute;left:966px;top:103px;width:1px;height:13px;background:#FFFFFF;"></div>
<div style="position:absolute;left:966px;top:116px;width:16px;height:1px;background:#404040;"></div>
<div style="position:absolute;left:981px;top:103px;width:1px;height:14px;background:#404040;"></div>
<div style="position:absolute;left:967px;top:115px;width:14px;height:1px;background:#808080;"></div>
<div style="position:absolute;left:980px;top:104px;width:1px;height:12px;background:#808080;"></div>
<div style="position:absolute;left:970px;top:112px;width:6px;height:2px;background:#000;"></div>
<div style="position:absolute;left:982px;top:103px;width:16px;height:14px;background:#C0C0FF;"></div>
<div style="position:absolute;left:982px;top:103px;width:15px;height:1px;background:#FFFFFF;"></div>
<div style="position:absolute;left:982px;top:103px;width:1px;height:13px;background:#FFFFFF;"></div>
<div style="position:absolute;left:982px;top:116px;width:16px;height:1px;background:#404040;"></div>
<div style="position:absolute;left:997px;top:103px;width:1px;height:14px;background:#404040;"></div>
<div style="position:absolute;left:983px;top:115px;width:14px;height:1px;background:#808080;"></div>
<div style="position:absolute;left:996px;top:104px;width:1px;height:12px;background:#808080;"></div>
<div style="position:absolute;left:985px;top:105px;width:9px;height:9px;background:#000;"></div>
<div style="position:absolute;left:986px;top:107px;width:7px;height:6px;background:#C0C0FF;"></div>
<div style="position:absolute;left:1000px;top:103px;width:16px;height:14px;background:#C0C0FF;"></div>
<div style="position:absolute;left:1000px;top:103px;width:15px;height:1px;background:#FFFFFF;"></div>
<div style="position:absolute;left:1000px;top:103px;width:1px;height:13px;background:#FFFFFF;"></div>
<div style="position:absolute;left:1000px;top:116px;width:16px;height:1px;background:#404040;"></div>
<div style="position:absolute;left:1015px;top:103px;width:1px;height:14px;background:#404040;"></div>
<div style="position:absolute;left:1001px;top:115px;width:14px;height:1px;background:#808080;"></div>
<div style="position:absolute;left:1014px;top:104px;width:1px;height:12px;background:#808080;"></div>
<svg style="position:absolute;left:1000px;top:103px" width="16" height="14"><path d="M4.5 3.5 L11.5 10.5 M11.5 3.5 L4.5 10.5" stroke="#000" stroke-width="1.6"/></svg>
<div style="position:absolute;left:6px;top:120px;width:1012px;height:1px;background:#808080;"></div>
<div style="position:absolute;left:6px;top:120px;width:1px;height:284px;background:#808080;"></div>
<div style="position:absolute;left:7px;top:121px;width:1010px;height:1px;background:#404040;"></div>
<div style="position:absolute;left:7px;top:121px;width:1px;height:282px;background:#404040;"></div>
<div style="position:absolute;left:6px;top:403px;width:1012px;height:1px;background:#FFFFFF;"></div>
<div style="position:absolute;left:1017px;top:120px;width:1px;height:284px;background:#FFFFFF;"></div>
<div style="position:absolute;left:7px;top:402px;width:1010px;height:1px;background:#C0C0FF;"></div>
<div style="position:absolute;left:1016px;top:121px;width:1px;height:282px;background:#C0C0FF;"></div>
<div style="position:absolute;left:8px;top:122px;width:1008px;height:280px;background:#000;"></div>
<svg style="position:absolute;left:8px;top:122px" width="1008" height="280" viewBox="8 122 1008 280">
<path d="M64 164.5 L1000 164.5 M64 187.5 L1000 187.5 M64 211.5 L1000 211.5 M64 234.5 L1000 234.5 M64 258.5 L1000 258.5 M64 282.5 L1000 282.5 M64 305.5 L1000 305.5 M64 329.5 L1000 329.5 M64 352.5 L1000 352.5 M158.5 140 L158.5 376 M251.5 140 L251.5 376 M345.5 140 L345.5 376 M438.5 140 L438.5 376 M532.5 140 L532.5 376 M626.5 140 L626.5 376 M719.5 140 L719.5 376 M813.5 140 L813.5 376 M906.5 140 L906.5 376" stroke="#787258" stroke-width="1" stroke-dasharray="4 4" shape-rendering="crispEdges" fill="none"/>
<polyline points="64.00,250.4 65.54,253.1 66.27,257.4 67.28,264.1 68.67,268.6 69.37,263.8 70.27,253.0 71.68,241.7 72.49,247.2 73.41,262.1 75.03,280.0 75.45,273.7 76.41,254.7 77.89,230.2 78.84,237.5 79.67,260.7 80.99,291.4 82.03,283.2 82.89,255.8 84.34,218.9 85.01,228.2 85.71,259.8 87.22,302.6 88.10,292.3 88.80,256.5 90.40,208.0 91.11,219.4 91.90,259.2 93.63,313.4 94.30,300.9 95.33,257.0 96.77,197.5 97.50,211.1 98.32,258.9 99.94,323.6 100.55,308.9 101.36,257.3 103.19,187.6 103.87,203.3 104.69,258.6 106.20,333.1 106.74,316.3 107.58,257.5 109.16,178.4 109.77,196.3 110.90,258.4 112.32,341.8 113.18,323.0 113.88,257.6 115.65,170.2 116.30,189.9 116.85,258.3 118.49,349.6 119.44,329.0 120.15,257.7 121.90,162.8 122.37,184.3 123.12,258.3 124.89,356.4 125.63,334.2 126.31,257.8 127.81,156.5 128.58,179.5 129.69,258.2 131.18,362.2 131.62,338.6 132.55,257.8 134.05,151.4 134.72,175.6 135.87,258.2 137.20,366.8 138.03,342.1 138.86,257.8 140.32,147.3 141.21,172.5 141.86,258.2 143.61,370.2 144.10,344.6 145.09,257.8 146.57,144.5 147.28,170.5 148.42,258.1 149.91,372.4 150.41,346.2 151.50,257.9 152.81,142.9 153.57,169.4 154.61,258.1 156.09,373.4 156.58,346.8 157.78,257.9 159.05,142.6 159.76,169.2 160.82,258.1 162.22,373.1 162.89,346.5 163.68,257.9 165.25,143.6 166.12,170.1 166.86,258.1 168.56,371.5 169.16,345.2 170.06,257.8 171.81,145.8 172.32,171.9 173.23,258.2 174.90,368.7 175.33,342.9 176.19,257.8 178.03,149.2 178.69,174.6 179.35,258.2 180.88,364.6 181.78,339.7 182.72,257.8 184.01,153.8 184.97,178.3 185.82,258.2 187.28,359.5 187.90,335.5 188.65,257.8 190.19,159.6 191.22,182.8 191.82,258.3 193.56,353.2 194.08,330.6 195.16,257.7 196.64,166.4 197.21,188.2 198.04,258.3 199.80,345.8 200.24,324.8 201.18,257.6 202.86,174.2 203.66,194.4 204.44,258.4 205.88,337.6 206.80,318.2 207.41,257.5 208.90,182.9 209.68,201.3 210.62,258.6 212.04,328.4 212.77,311.0 213.71,257.3 215.35,192.4 215.87,208.8 216.83,258.9 218.59,318.5 219.31,303.2 220.06,257.0 221.63,202.6 222.28,217.0 222.99,259.2 224.51,308.0 225.19,294.7 226.39,256.5 227.88,213.4 228.66,225.7 229.18,259.8 230.97,297.1 231.60,285.8 232.57,255.8 233.97,224.6 234.91,234.8 235.44,260.7 237.18,285.8 237.94,276.4 238.87,254.7 240.37,236.0 241.04,244.4 241.95,262.1 243.56,274.3 244.03,266.6 245.03,253.0 246.67,247.4 247.35,254.5 248.05,264.1 249.75,262.9 250.46,256.3 251.23,250.4 252.81,259.1 253.40,264.1 254.35,264.1 255.92,250.5 256.41,247.8 257.49,253.0 259.18,271.8 259.83,272.4 260.65,262.1 262.08,238.0 262.89,239.3 263.71,254.7 265.22,284.1 266.05,281.0 266.64,260.7 268.45,225.9 268.87,230.8 269.96,255.8 271.47,296.0 272.07,289.4 273.11,259.8 274.60,214.3 275.33,222.4 276.32,256.5 277.63,307.3 278.22,297.7 279.21,259.2 280.91,203.3 281.42,214.2 282.28,257.0 284.11,318.0 284.71,305.7 285.50,258.9 287.23,192.9 287.70,206.5 288.70,257.3 290.09,328.1 290.86,313.2 291.87,258.6 293.48,183.2 294.15,199.3 294.84,257.5 296.47,337.3 297.06,320.1 297.86,258.4 299.56,174.4 300.37,192.6 301.25,257.6 302.76,345.6 303.53,326.4 304.16,258.3 305.68,166.6 306.47,186.7 307.28,257.7 308.81,353.0 309.57,332.0 310.53,258.3 312.04,159.7 312.66,181.6 313.73,257.8 315.34,359.3 315.83,336.7 316.56,258.2 318.10,153.9 319.11,177.2 319.67,257.8 321.48,364.5 322.11,340.6 322.89,258.2 324.63,149.3 325.03,173.8 325.94,257.8 327.62,368.6 328.15,343.6 329.32,258.2 330.66,145.9 331.31,171.3 332.15,257.8 333.93,371.4 334.55,345.7 335.49,258.1 337.06,143.6 337.80,169.7 338.73,257.9 340.19,373.0 340.69,346.8 341.67,258.1 343.12,142.7 343.74,169.1 344.79,257.9 346.44,373.3 346.93,346.9 347.83,258.1 349.42,143.0 350.24,169.4 351.05,257.9 352.64,372.4 353.38,346.1 354.12,258.1 355.83,144.6 356.56,170.7 357.13,257.8 359.00,370.1 359.61,344.3 360.26,258.2 361.94,147.4 362.69,173.0 363.67,257.8 365.03,366.7 365.79,341.5 366.78,258.2 368.31,151.5 369.05,176.2 369.75,257.8 371.38,362.1 371.90,337.9 372.96,258.2 374.56,156.7 375.18,180.3 376.08,257.8 377.45,356.3 378.40,333.4 379.30,258.3 380.86,163.0 381.38,185.2 382.35,257.7 383.73,349.4 384.64,328.0 385.49,258.3 386.86,170.4 387.45,190.9 388.46,257.6 390.06,341.6 390.83,322.0 391.60,258.4 392.98,178.7 393.96,197.3 394.56,257.5 396.39,332.8 396.84,315.2 397.78,258.6 399.51,187.9 399.95,204.4 400.83,257.3 402.53,323.1 403.29,307.9 404.21,258.9 405.71,198.0 406.49,212.0 407.20,257.0 408.93,312.7 409.29,300.0 410.22,259.2 411.89,208.7 412.49,220.1 413.53,256.5 415.05,301.7 415.69,291.8 416.69,259.8 418.14,220.0 418.74,228.4 419.64,255.8 421.37,290.1 422.08,283.3 422.69,260.7 424.49,231.9 425.22,236.9 425.93,254.7 427.51,278.0 428.05,274.8 429.05,262.1 430.60,244.2 431.33,245.4 431.98,253.0 433.90,265.5 434.41,266.4 435.24,264.1 436.95,256.9 437.55,253.7 438.40,250.4 440.03,253.1 440.48,257.4 441.53,264.1 443.05,268.6 443.94,263.8 444.80,253.0 446.11,241.7 446.88,247.2 447.62,262.1 449.30,280.0 450.12,273.7 451.03,254.7 452.43,230.2 453.06,237.5 453.88,260.7 455.60,291.4 456.41,283.2 456.98,255.8 458.78,218.9 459.19,228.2 460.13,259.8 461.70,302.6 462.56,292.3 463.29,256.5 464.87,208.0 465.65,219.4 466.33,259.2 468.13,313.4 468.59,300.9 469.60,257.0 471.07,197.5 471.73,211.1 472.73,258.9 474.26,323.6 474.92,308.9 475.81,257.3 477.41,187.6 477.96,203.3 478.85,258.6 480.57,333.1 481.26,316.3 482.09,257.5 483.77,178.4 484.37,196.3 485.33,258.4 486.66,341.8 487.54,323.0 488.44,257.6 490.03,170.2 490.50,189.9 491.37,258.3 493.16,349.6 493.58,329.0 494.75,257.7 496.27,162.8 496.67,184.3 497.58,258.3 499.32,356.4 499.84,334.2 500.65,257.8 502.48,156.5 503.02,179.5 504.03,258.2 505.34,362.2 506.13,338.6 507.11,257.8 508.42,151.4 509.17,175.6 510.23,258.2 511.87,366.8 512.58,342.1 513.14,257.8 514.84,147.3 515.62,172.5 516.40,258.2 518.03,370.2 518.53,344.6 519.36,257.8 520.93,144.5 521.59,170.5 522.66,258.1 524.21,372.4 524.91,346.2 525.63,257.9 527.20,142.9 527.90,169.4 529.01,258.1 530.62,373.4 531.29,346.8 531.85,257.9 533.40,142.6 534.42,169.2 535.11,258.1 536.78,373.1 537.30,346.5 538.23,257.9 539.81,143.6 540.46,170.1 541.40,258.1 542.74,371.5 543.68,345.2 544.61,257.8 545.92,145.8 546.71,171.9 547.69,258.2 549.12,368.7 549.73,342.9 550.59,257.8 552.28,149.2 552.78,174.6 553.99,258.2 555.51,364.6 556.16,339.7 557.10,257.8 558.57,153.8 559.17,178.3 560.12,258.2 561.64,359.5 562.51,335.5 563.31,257.8 564.67,159.6 565.60,182.8 566.41,258.3 567.98,353.2 568.68,330.6 569.40,257.7 571.15,166.4 571.83,188.2 572.63,258.3 574.22,345.8 574.91,324.8 575.64,257.6 577.32,174.2 577.77,194.4 578.74,258.4 580.35,337.6 580.86,318.2 581.87,257.5 583.53,182.9 584.21,201.3 584.94,258.6 586.77,328.4 587.35,311.0 588.10,257.3 589.78,192.4 590.43,208.8 591.29,258.9 592.80,318.5 593.71,303.2 594.45,257.0 596.04,202.6 596.74,217.0 597.70,259.2 598.90,308.0 599.81,294.7 600.73,256.5 602.11,213.4 602.85,225.7 603.59,259.8 605.21,297.1 605.96,285.8 606.73,255.8 608.35,224.6 609.28,234.8 610.02,260.7 611.56,285.8 612.42,276.4 613.15,254.7 614.87,236.0 615.42,244.4 616.36,262.1 617.64,274.3 618.52,266.6 619.46,253.0 620.75,247.4 621.77,254.5 622.35,264.1 624.03,262.9 624.60,256.3 625.60,250.4 627.20,259.1 627.68,264.1 628.89,264.1 630.25,250.5 630.98,247.8 631.88,253.0 633.35,271.8 634.01,272.4 635.02,262.1 636.54,238.0 637.13,239.3 638.16,254.7 639.56,284.1 640.14,281.0 641.10,260.7 642.59,225.9 643.32,230.8 644.42,255.8 645.84,296.0 646.72,289.4 647.53,259.8 648.83,214.3 649.87,222.4 650.73,256.5 651.96,307.3 652.96,297.7 653.65,259.2 655.23,203.3 656.10,214.2 656.70,257.0 658.37,318.0 659.21,305.7 660.00,258.9 661.47,192.9 662.35,206.5 663.16,257.3 664.64,328.1 665.14,313.2 666.21,258.6 667.70,183.2 668.30,199.3 669.11,257.5 670.85,337.3 671.39,320.1 672.38,258.4 674.02,174.4 674.63,192.6 675.43,257.6 677.11,345.6 677.74,326.4 678.74,258.3 680.21,166.6 681.07,186.7 681.93,257.7 683.41,353.0 683.91,332.0 684.74,258.3 686.59,159.7 687.23,181.6 688.05,257.8 689.51,359.3 690.16,336.7 691.19,258.2 692.70,153.9 693.40,177.2 694.29,257.8 695.89,364.5 696.37,340.6 697.27,258.2 699.10,149.3 699.76,173.8 700.62,257.8 701.87,368.6 702.56,343.6 703.51,258.2 705.13,145.9 705.89,171.3 706.57,257.8 708.30,371.4 708.81,345.7 709.69,258.1 711.47,143.6 712.11,169.7 713.01,257.9 714.47,373.0 715.20,346.8 715.97,258.1 717.58,142.7 718.42,169.1 719.33,257.9 720.60,373.3 721.30,346.9 722.44,258.1 723.93,143.0 724.67,169.4 725.33,257.9 726.97,372.4 727.60,346.1 728.68,258.1 730.07,144.6 730.86,170.7 731.86,257.8 733.17,370.1 733.94,344.3 734.89,258.2 736.52,147.4 737.02,173.0 737.87,257.8 739.33,366.7 740.31,341.5 740.88,258.2 742.44,151.5 743.31,176.2 744.15,257.8 745.79,362.1 746.33,337.9 747.38,258.2 748.68,156.7 749.42,180.3 750.46,257.8 751.80,356.3 752.57,333.4 753.60,258.3 755.15,163.0 755.69,185.2 756.51,257.7 758.15,349.4 758.97,328.0 759.71,258.3 761.18,170.4 762.08,190.9 762.91,257.6 764.60,341.6 765.29,322.0 766.15,258.4 767.54,178.7 768.36,197.3 769.05,257.5 770.61,332.8 771.33,315.2 772.40,258.6 773.95,187.9 774.39,204.4 775.31,257.3 776.87,323.1 777.56,307.9 778.44,258.9 780.00,198.0 780.61,212.0 781.62,257.0 783.27,312.7 783.86,300.0 784.85,259.2 786.30,208.7 786.85,220.1 787.94,256.5 789.54,301.7 790.00,291.8 790.78,259.8 792.53,220.0 793.22,228.4 794.11,255.8 795.81,290.1 796.38,283.3 797.31,260.7 798.60,231.9 799.46,236.9 800.43,254.7 801.72,278.0 802.41,274.8 803.53,262.1 805.15,244.2 805.53,245.4 806.61,253.0 807.99,265.5 808.90,266.4 809.74,264.1 811.14,256.9 811.82,253.7 812.90,250.4 814.37,253.1 815.15,257.4 815.88,264.1 817.42,268.6 818.34,263.8 819.10,253.0 820.60,241.7 821.30,247.2 822.24,262.1 823.80,280.0 824.56,273.7 825.25,254.7 826.96,230.2 827.59,237.5 828.53,260.7 830.07,291.4 830.77,283.2 831.67,255.8 833.25,218.9 833.82,228.2 834.65,259.8 836.28,302.6 837.00,292.3 837.73,256.5 839.29,208.0 839.87,219.4 840.97,259.2 842.62,313.4 843.08,300.9 843.88,257.0 845.45,197.5 846.22,211.1 847.04,258.9 848.86,323.6 849.20,308.9 850.17,257.3 851.66,187.6 852.54,203.3 853.46,258.6 854.80,333.1 855.44,316.3 856.46,257.5 858.07,178.4 858.88,196.3 859.43,258.4 861.01,341.8 861.73,323.0 862.61,257.6 864.18,170.2 865.05,189.9 865.88,258.3 867.30,349.6 867.97,329.0 868.88,257.7 870.40,162.8 871.30,184.3 872.01,258.3 873.66,356.4 874.45,334.2 875.19,257.8 876.67,156.5 877.59,179.5 878.48,258.2 879.82,362.2 880.58,338.6 881.61,257.8 882.99,151.4 883.58,175.6 884.39,258.2 886.29,366.8 886.92,342.1 887.64,257.8 889.25,147.3 889.93,172.5 890.72,258.2 892.54,370.2 893.11,344.6 893.82,257.8 895.30,144.5 896.16,170.5 896.99,258.1 898.71,372.4 899.37,346.2 900.20,257.9 901.59,142.9 902.28,169.4 903.21,258.1 904.75,373.4 905.66,346.8 906.41,257.9 908.01,142.6 908.83,169.2 909.43,258.1 911.09,373.1 911.64,346.5 912.74,257.9 914.01,143.6 915.01,170.1 915.89,258.1 917.44,371.5 917.85,345.2 918.79,257.8 920.52,145.8 920.98,171.9 921.99,258.2 923.55,368.7 924.42,342.9 925.15,257.8 926.81,149.2 927.29,174.6 928.35,258.2 929.77,364.6 930.64,339.7 931.21,257.8 933.04,153.8 933.50,178.3 934.50,258.2 936.05,359.5 936.60,335.5 937.72,257.8 939.09,159.6 939.78,182.8 940.56,258.3 942.21,353.2 942.95,330.6 943.92,257.7 945.35,166.4 946.16,188.2 946.81,258.3 948.48,345.8 949.19,324.8 950.25,257.6 951.76,174.2 952.38,194.4 953.02,258.4 954.71,337.6 955.53,318.2 956.22,257.5 957.90,182.9 958.55,201.3 959.26,258.6 961.18,328.4 961.80,311.0 962.45,257.3 964.16,192.4 964.73,208.8 965.63,258.9 967.25,318.5 967.85,303.2 968.74,257.0 970.32,202.6 971.11,217.0 971.83,259.2 973.37,308.0 974.25,294.7 974.98,256.5 976.77,213.4 977.31,225.7 978.24,259.8 979.66,297.1 980.53,285.8 981.13,255.8 982.71,224.6 983.37,234.8 984.47,260.7 986.04,285.8 986.53,276.4 987.48,254.7 989.21,236.0 989.80,244.4 990.49,262.1 992.10,274.3 992.76,266.6 993.62,253.0 995.29,247.4 995.85,254.5 997.04,264.1 998.41,262.9 999.13,256.3 1000.00,250.4" stroke="#00FF00" stroke-width="1" fill="none" stroke-linejoin="miter" shape-rendering="crispEdges"/>
<path d="M64.5 140.5 L1000.5 140.5 L1000.5 376.5 L64.5 376.5 Z M57 140.5 L64 140.5 M57 164.5 L64 164.5 M57 187.5 L64 187.5 M57 211.5 L64 211.5 M57 234.5 L64 234.5 M57 258.5 L64 258.5 M57 282.5 L64 282.5 M57 305.5 L64 305.5 M57 329.5 L64 329.5 M57 352.5 L64 352.5 M57 376.5 L64 376.5 M64.5 376 L64.5 384 M158.5 376 L158.5 384 M251.5 376 L251.5 384 M345.5 376 L345.5 384 M438.5 376 L438.5 384 M532.5 376 L532.5 384 M626.5 376 L626.5 384 M719.5 376 L719.5 384 M813.5 376 L813.5 384 M906.5 376 L906.5 384 M1000.5 376 L1000.5 384" stroke="#ACAC8A" stroke-width="1" shape-rendering="crispEdges" fill="none"/>
<text x="56" y="145" text-anchor="end" font-family="Liberation Sans" font-weight="bold" font-size="13.3" fill="#ACAC8A">450mV</text>
<text x="56" y="169" text-anchor="end" font-family="Liberation Sans" font-weight="bold" font-size="13.3" fill="#ACAC8A">360mV</text>
<text x="56" y="192" text-anchor="end" font-family="Liberation Sans" font-weight="bold" font-size="13.3" fill="#ACAC8A">270mV</text>
<text x="56" y="216" text-anchor="end" font-family="Liberation Sans" font-weight="bold" font-size="13.3" fill="#ACAC8A">180mV</text>
<text x="56" y="239" text-anchor="end" font-family="Liberation Sans" font-weight="bold" font-size="13.3" fill="#ACAC8A">90mV</text>
<text x="56" y="263" text-anchor="end" font-family="Liberation Sans" font-weight="bold" font-size="13.3" fill="#ACAC8A">0mV</text>
<text x="56" y="287" text-anchor="end" font-family="Liberation Sans" font-weight="bold" font-size="13.3" fill="#ACAC8A">-90mV</text>
<text x="56" y="310" text-anchor="end" font-family="Liberation Sans" font-weight="bold" font-size="13.3" fill="#ACAC8A">-180mV</text>
<text x="56" y="334" text-anchor="end" font-family="Liberation Sans" font-weight="bold" font-size="13.3" fill="#ACAC8A">-270mV</text>
<text x="56" y="357" text-anchor="end" font-family="Liberation Sans" font-weight="bold" font-size="13.3" fill="#ACAC8A">-360mV</text>
<text x="56" y="381" text-anchor="end" font-family="Liberation Sans" font-weight="bold" font-size="13.3" fill="#ACAC8A">-450mV</text>
<text x="65" y="397" text-anchor="middle" font-family="Liberation Sans" font-weight="bold" font-size="13.5" fill="#ACAC8A">0µs</text>
<text x="159" y="397" text-anchor="middle" font-family="Liberation Sans" font-weight="bold" font-size="13.5" fill="#ACAC8A">5µs</text>
<text x="252" y="397" text-anchor="middle" font-family="Liberation Sans" font-weight="bold" font-size="13.5" fill="#ACAC8A">10µs</text>
<text x="346" y="397" text-anchor="middle" font-family="Liberation Sans" font-weight="bold" font-size="13.5" fill="#ACAC8A">15µs</text>
<text x="439" y="397" text-anchor="middle" font-family="Liberation Sans" font-weight="bold" font-size="13.5" fill="#ACAC8A">20µs</text>
<text x="533" y="397" text-anchor="middle" font-family="Liberation Sans" font-weight="bold" font-size="13.5" fill="#ACAC8A">25µs</text>
<text x="627" y="397" text-anchor="middle" font-family="Liberation Sans" font-weight="bold" font-size="13.5" fill="#ACAC8A">30µs</text>
<text x="720" y="397" text-anchor="middle" font-family="Liberation Sans" font-weight="bold" font-size="13.5" fill="#ACAC8A">35µs</text>
<text x="814" y="397" text-anchor="middle" font-family="Liberation Sans" font-weight="bold" font-size="13.5" fill="#ACAC8A">40µs</text>
<text x="907" y="397" text-anchor="middle" font-family="Liberation Sans" font-weight="bold" font-size="13.5" fill="#ACAC8A">45µs</text>
<text x="1001" y="397" text-anchor="middle" font-family="Liberation Sans" font-weight="bold" font-size="13.5" fill="#ACAC8A">50µs</text>
<text x="532" y="134" text-anchor="middle" font-family="Liberation Sans" font-weight="bold" font-size="12.1" fill="#00FF00">V(out)</text>
</svg>
<div style="position:absolute;left:2px;top:408px;width:1020px;height:311px;background:#C0C0FF;"></div>
<div style="position:absolute;left:2px;top:408px;width:1019px;height:1px;background:#C0C0FF;"></div>
<div style="position:absolute;left:2px;top:408px;width:1px;height:310px;background:#C0C0FF;"></div>
<div style="position:absolute;left:3px;top:409px;width:1017px;height:1px;background:#FFFFFF;"></div>
<div style="position:absolute;left:3px;top:409px;width:1px;height:308px;background:#FFFFFF;"></div>
<div style="position:absolute;left:2px;top:718px;width:1020px;height:1px;background:#404040;"></div>
<div style="position:absolute;left:1021px;top:408px;width:1px;height:311px;background:#404040;"></div>
<div style="position:absolute;left:3px;top:717px;width:1018px;height:1px;background:#808080;"></div>
<div style="position:absolute;left:1020px;top:409px;width:1px;height:309px;background:#808080;"></div>
<div style="position:absolute;left:6px;top:412px;width:152px;height:18px;background:#002040;"></div>
<div style="position:absolute;left:158px;top:412px;width:23px;height:18px;background:#202040;"></div>
<div style="position:absolute;left:181px;top:412px;width:171px;height:18px;background:#204080;"></div>
<div style="position:absolute;left:352px;top:412px;width:12px;height:18px;background:#404080;"></div>
<div style="position:absolute;left:364px;top:412px;width:182px;height:18px;background:#406080;"></div>
<div style="position:absolute;left:546px;top:412px;width:88px;height:18px;background:#608080;"></div>
<div style="position:absolute;left:634px;top:412px;width:94px;height:18px;background:#6080FF;"></div>
<div style="position:absolute;left:728px;top:412px;width:14px;height:18px;background:#60A0FF;"></div>
<div style="position:absolute;left:742px;top:412px;width:168px;height:18px;background:#80A0FF;"></div>
<div style="position:absolute;left:910px;top:412px;width:28px;height:18px;background:#80C0FF;"></div>
<div style="position:absolute;left:938px;top:412px;width:26px;height:18px;background:#A0C0FF;"></div>
<svg style="position:absolute;left:8px;top:413px" width="16" height="16" viewBox="0 0 16 16" ><rect x="2" y="7" width="3" height="1" fill="#0000FF"/><rect x="5" y="3" width="2" height="9" fill="#0000FF"/><path d="M7 4.5 L12 0 M7 10 L13 15.5" stroke="#0000FF" stroke-width="1.1" fill="none"/><path d="M9 13.8 L12.5 12.2 L12 15.5 Z" fill="#0000FF"/></svg>
<div style="position:absolute;left:27px;top:415px;font:bold 12.3px/12.3px 'Liberation Sans', sans-serif;color:#FFF;white-space:nowrap;letter-spacing:-0.3px;">DBM.asc</div>
<div style="position:absolute;left:966px;top:414px;width:16px;height:14px;background:#C0C0FF;"></div>
<div style="position:absolute;left:966px;top:414px;width:15px;height:1px;background:#FFFFFF;"></div>
<div style="position:absolute;left:966px;top:414px;width:1px;height:13px;background:#FFFFFF;"></div>
<div style="position:absolute;left:966px;top:427px;width:16px;height:1px;background:#404040;"></div>
<div style="position:absolute;left:981px;top:414px;width:1px;height:14px;background:#404040;"></div>
<div style="position:absolute;left:967px;top:426px;width:14px;height:1px;background:#808080;"></div>
<div style="position:absolute;left:980px;top:415px;width:1px;height:12px;background:#808080;"></div>
<div style="position:absolute;left:970px;top:423px;width:6px;height:2px;background:#000;"></div>
<div style="position:absolute;left:982px;top:414px;width:16px;height:14px;background:#C0C0FF;"></div>
<div style="position:absolute;left:982px;top:414px;width:15px;height:1px;background:#FFFFFF;"></div>
<div style="position:absolute;left:982px;top:414px;width:1px;height:13px;background:#FFFFFF;"></div>
<div style="position:absolute;left:982px;top:427px;width:16px;height:1px;background:#404040;"></div>
<div style="position:absolute;left:997px;top:414px;width:1px;height:14px;background:#404040;"></div>
<div style="position:absolute;left:983px;top:426px;width:14px;height:1px;background:#808080;"></div>
<div style="position:absolute;left:996px;top:415px;width:1px;height:12px;background:#808080;"></div>
<div style="position:absolute;left:985px;top:416px;width:9px;height:9px;background:#000;"></div>
<div style="position:absolute;left:986px;top:418px;width:7px;height:6px;background:#C0C0FF;"></div>
<div style="position:absolute;left:1000px;top:414px;width:16px;height:14px;background:#C0C0FF;"></div>
<div style="position:absolute;left:1000px;top:414px;width:15px;height:1px;background:#FFFFFF;"></div>
<div style="position:absolute;left:1000px;top:414px;width:1px;height:13px;background:#FFFFFF;"></div>
<div style="position:absolute;left:1000px;top:427px;width:16px;height:1px;background:#404040;"></div>
<div style="position:absolute;left:1015px;top:414px;width:1px;height:14px;background:#404040;"></div>
<div style="position:absolute;left:1001px;top:426px;width:14px;height:1px;background:#808080;"></div>
<div style="position:absolute;left:1014px;top:415px;width:1px;height:12px;background:#808080;"></div>
<svg style="position:absolute;left:1000px;top:414px" width="16" height="14"><path d="M4.5 3.5 L11.5 10.5 M11.5 3.5 L4.5 10.5" stroke="#000" stroke-width="1.6"/></svg>
<div style="position:absolute;left:6px;top:431px;width:1012px;height:1px;background:#808080;"></div>
<div style="position:absolute;left:6px;top:431px;width:1px;height:284px;background:#808080;"></div>
<div style="position:absolute;left:7px;top:432px;width:1010px;height:1px;background:#404040;"></div>
<div style="position:absolute;left:7px;top:432px;width:1px;height:282px;background:#404040;"></div>
<div style="position:absolute;left:6px;top:714px;width:1012px;height:1px;background:#FFFFFF;"></div>
<div style="position:absolute;left:1017px;top:431px;width:1px;height:284px;background:#FFFFFF;"></div>
<div style="position:absolute;left:7px;top:713px;width:1010px;height:1px;background:#C0C0FF;"></div>
<div style="position:absolute;left:1016px;top:432px;width:1px;height:282px;background:#C0C0FF;"></div>
<div style="position:absolute;left:8px;top:433px;width:1008px;height:280px;background:#FFF;"></div>
<svg style="position:absolute;left:8px;top:433px" width="1008" height="280" viewBox="8 433 1008 280">
<path d="M252.5 521.5 L252.5 504.5 L277.5 504.5 M315.5 504.5 L330.5 504.5 L330.5 519.5 M330.5 559.5 L330.5 574.5 L252.5 574.5 L252.5 554.5 M291.5 574.5 L291.5 597.5 M370.5 480.5 L370.5 464.5 L495.5 464.5 L495.5 512.5 M495.5 558.5 L495.5 613.5 L683.5 613.5 L683.5 598.5 M370.5 520.5 L370.5 557.5 M370.5 543.5 L424.5 543.5 L424.5 554.5 M370.5 598.5 L370.5 621.5 L558.5 621.5 L558.5 558.5 M424.5 586.5 L424.5 653.5 M424.5 690.5 L424.5 700.5 M683.5 520.5 L683.5 557.5 M683.5 543.5 L636.5 543.5 L636.5 566.5 M753.5 489.5 L753.5 511.5 M722.5 519.5 L722.5 511.5 L778.5 511.5 L778.5 524.5 M722.5 558.5 L722.5 566.5 L778.5 566.5 L778.5 554.5 M745.5 566.5 L745.5 582.5 M370.5 520.5 L370.5 557.5 M495.5 511.5 L512.5 511.5 M542.5 511.5 L558.5 511.5 M495.5 574.5 L512.5 574.5 M541.5 574.5 L558.5 574.5 M495.5 511.5 L495.5 528.5 M558.5 511.5 L558.5 528.5 M558.5 558.5 L558.5 574.5 M558.5 528.5 L558.5 464.5 L683.5 464.5 L683.5 480.5" stroke="#0000FF" stroke-width="1" fill="none" shape-rendering="crispEdges"/>
<rect x="289" y="572" width="5" height="5" fill="#0000FF"/>
<rect x="368" y="541" width="5" height="5" fill="#0000FF"/>
<rect x="493" y="509" width="5" height="5" fill="#0000FF"/>
<rect x="556" y="509" width="5" height="5" fill="#0000FF"/>
<rect x="493" y="572" width="5" height="5" fill="#0000FF"/>
<rect x="556" y="572" width="5" height="5" fill="#0000FF"/>
<rect x="681" y="541" width="5" height="5" fill="#0000FF"/>
<rect x="751" y="509" width="5" height="5" fill="#0000FF"/>
<rect x="743" y="564" width="5" height="5" fill="#0000FF"/>
<path d="M282.5 597.5 L300.5 597.5 L291.5 606.5 Z" stroke="#0000FF" fill="none"/>
<path d="M415.5 700.5 L433.5 700.5 L424.5 709.5 Z" stroke="#0000FF" fill="none"/>
<path d="M627.5 566.5 L645.5 566.5 L636.5 575.5 Z" stroke="#0000FF" fill="none"/>
<path d="M736.5 582.5 L754.5 582.5 L745.5 591.5 Z" stroke="#0000FF" fill="none"/>
<circle cx="252.5" cy="538.5" r="15.5" stroke="#000080" fill="none"/>
<path d="M252.5 523.0 L252.5 521.0 M252.5 554.0 L252.5 557.5 M248 530.0 L257 530.0 M252.5 525.5 L252.5 534.5 M248 549.5 L257 549.5" stroke="#000080" fill="none"/>
<circle cx="424.5" cy="671.5" r="15.5" stroke="#000080" fill="none"/>
<path d="M424.5 656.0 L424.5 654.0 M424.5 687.0 L424.5 690.5 M420 663.0 L429 663.0 M424.5 658.5 L424.5 667.5 M420 682.5 L429 682.5" stroke="#000080" fill="none"/>
<polyline points="277,504.5 280,504.5 283.5,496.5 291.5,511.5 299.5,496.5 307.5,511.5 311,504.5 315.5,504.5" stroke="#000080" fill="none"/>
<polyline points="424.5,554 432.5,558 417.5,566 432.5,574 417.5,582 424.5,586" stroke="#000080" fill="none"/>
<polyline points="778.5,524 786.5,528 771.5,536 786.5,544 771.5,552 778.5,556" stroke="#000080" fill="none"/>
<path d="M370.5 480.5 Q377.5 480.5 377.5 485.5 L377.5 492.5 M377.5 493.5 C374.5 491.3 366.0 491.3 364.5 493.5 C366.0 496.1 373.5 496.5 377.5 494.0 M377.5 494.5 L377.5 505.0 M377.5 505.5 C374.5 504.3 366.0 504.0 364.5 505.0 C366.0 508.0 373.5 508.5 377.5 506.0 M377.5 506.5 L377.5 515.5 Q377.5 520.5 370.5 520.5" stroke="#000080" fill="none" stroke-width="1.05"/>
<rect x="363.5" y="492.5" width="2" height="2" fill="#000080"/>
<rect x="363.5" y="504.5" width="2" height="2" fill="#000080"/>
<circle cx="366.5" cy="513.5" r="1.9" stroke="#000080" fill="none" stroke-width="1"/>
<path d="M370.5 557.5 Q377.5 557.5 377.5 562.5 L377.5 569.5 M377.5 570.5 C374.5 568.3 366.0 568.3 364.5 570.5 C366.0 573.1 373.5 573.5 377.5 571.0 M377.5 571.5 L377.5 582.0 M377.5 582.5 C374.5 581.3 366.0 581.0 364.5 582.0 C366.0 585.0 373.5 585.5 377.5 583.0 M377.5 583.5 L377.5 592.5 Q377.5 597.5 370.5 597.5" stroke="#000080" fill="none" stroke-width="1.05"/>
<rect x="363.5" y="569.5" width="2" height="2" fill="#000080"/>
<rect x="363.5" y="581.5" width="2" height="2" fill="#000080"/>
<circle cx="366.5" cy="590.5" r="1.9" stroke="#000080" fill="none" stroke-width="1"/>
<path d="M330.5 519.5 Q337.5 519.5 337.5 524.5 L337.5 531.5 M337.5 532.5 C334.5 530.3 326.0 530.3 324.5 532.5 C326.0 535.1 333.5 535.5 337.5 533.0 M337.5 533.5 L337.5 544.0 M337.5 544.5 C334.5 543.3 326.0 543.0 324.5 544.0 C326.0 547.0 333.5 547.5 337.5 545.0 M337.5 545.5 L337.5 554.5 Q337.5 559.5 330.5 559.5" stroke="#000080" fill="none" stroke-width="1.05"/>
<rect x="323.5" y="531.5" width="2" height="2" fill="#000080"/>
<rect x="323.5" y="543.5" width="2" height="2" fill="#000080"/>
<circle cx="326.5" cy="552.5" r="1.9" stroke="#000080" fill="none" stroke-width="1"/>
<path d="M683.5 480.5 Q676.5 480.5 676.5 485.5 L676.5 492.5 M676.5 493.5 C679.5 491.3 688.0 491.3 689.5 493.5 C688.0 496.1 680.5 496.5 676.5 494.0 M676.5 494.5 L676.5 505.0 M676.5 505.5 C679.5 504.3 688.0 504.0 689.5 505.0 C688.0 508.0 680.5 508.5 676.5 506.0 M676.5 506.5 L676.5 515.5 Q676.5 520.5 683.5 520.5" stroke="#000080" fill="none" stroke-width="1.05"/>
<rect x="688.5" y="492.5" width="2" height="2" fill="#000080"/>
<rect x="688.5" y="504.5" width="2" height="2" fill="#000080"/>
<circle cx="687.5" cy="513.5" r="1.9" stroke="#000080" fill="none" stroke-width="1"/>
<path d="M683.5 557.5 Q676.5 557.5 676.5 562.5 L676.5 569.5 M676.5 570.5 C679.5 568.3 688.0 568.3 689.5 570.5 C688.0 573.1 680.5 573.5 676.5 571.0 M676.5 571.5 L676.5 582.0 M676.5 582.5 C679.5 581.3 688.0 581.0 689.5 582.0 C688.0 585.0 680.5 585.5 676.5 583.0 M676.5 583.5 L676.5 592.5 Q676.5 597.5 683.5 597.5" stroke="#000080" fill="none" stroke-width="1.05"/>
<rect x="688.5" y="569.5" width="2" height="2" fill="#000080"/>
<rect x="688.5" y="581.5" width="2" height="2" fill="#000080"/>
<circle cx="687.5" cy="590.5" r="1.9" stroke="#000080" fill="none" stroke-width="1"/>
<path d="M722.5 519.5 Q715.5 519.5 715.5 524.5 L715.5 531.5 M715.5 532.5 C718.5 530.3 727.0 530.3 728.5 532.5 C727.0 535.1 719.5 535.5 715.5 533.0 M715.5 533.5 L715.5 544.0 M715.5 544.5 C718.5 543.3 727.0 543.0 728.5 544.0 C727.0 547.0 719.5 547.5 715.5 545.0 M715.5 545.5 L715.5 554.5 Q715.5 559.5 722.5 559.5" stroke="#000080" fill="none" stroke-width="1.05"/>
<rect x="727.5" y="531.5" width="2" height="2" fill="#000080"/>
<rect x="727.5" y="543.5" width="2" height="2" fill="#000080"/>
<circle cx="726.5" cy="552.5" r="1.9" stroke="#000080" fill="none" stroke-width="1"/>
<path d="M512 511.5 L520 511.5 M520.5 504 L520.5 519 L532 511.5 Z M532.5 504 L532.5 519 M532 511.5 L543 511.5" stroke="#000080" fill="none"/>
<path d="M512 574.5 L520 574.5 M520.5 567 L520.5 582 M520.5 574.5 L532.5 567 L532.5 582 Z M532 574.5 L542 574.5" stroke="#000080" fill="none"/>
<path d="M495.5 528 L495.5 537.5 M487 537.5 L504 537.5 M495.5 537.5 L487 549.5 L504 549.5 Z M495.5 549.5 L495.5 559" stroke="#000080" fill="none"/>
<path d="M558.5 528 L558.5 537.5 M551 537.5 L566 537.5 L558.5 549.5 Z M551 549.5 L566 549.5 M558.5 549.5 L558.5 559" stroke="#000080" fill="none"/>
<path d="M747.5 489.5 L747.5 466 L753.5 460 L759.5 466 L759.5 489.5 Z" stroke="#0000FF" fill="none"/>
<text transform="translate(757.5,487.5) rotate(-90)" font-family="Liberation Sans" font-weight="bold" font-size="11.2" fill="#000">out</text>
<text x="296" y="449" font-family="Liberation Sans" font-size="10" letter-spacing="0.2" fill="#000">K1 L1 L2 L3 1</text>
<text x="264" y="523" font-family="Liberation Sans" font-size="10" letter-spacing="0.2" fill="#000">V1</text>
<text x="290" y="494" font-family="Liberation Sans" font-size="10" letter-spacing="0.2" fill="#000">R1</text>
<text x="289" y="521" font-family="Liberation Sans" font-size="10" letter-spacing="0.2" fill="#000">50</text>
<text x="265" y="566" font-family="Liberation Sans" font-size="10" letter-spacing="0.2" fill="#000">SINE(0 1 3e6)</text>
<text x="341" y="535" font-family="Liberation Sans" font-size="10" letter-spacing="0.2" fill="#000">L3</text>
<text x="341" y="554.5" font-family="Liberation Sans" font-size="10" letter-spacing="0.2" fill="#000">10µ</text>
<text x="380" y="496" font-family="Liberation Sans" font-size="10" letter-spacing="0.2" fill="#000">L1</text>
<text x="380" y="515.5" font-family="Liberation Sans" font-size="10" letter-spacing="0.2" fill="#000">10µ</text>
<text x="380" y="573.5" font-family="Liberation Sans" font-size="10" letter-spacing="0.2" fill="#000">L2</text>
<text x="380" y="594.5" font-family="Liberation Sans" font-size="10" letter-spacing="0.2" fill="#000">10µ</text>
<text x="403" y="564" font-family="Liberation Sans" font-size="10" letter-spacing="0.2" fill="#000">R2</text>
<text x="403" y="582" font-family="Liberation Sans" font-size="10" letter-spacing="0.2" fill="#000">50</text>
<text x="521" y="502" font-family="Liberation Sans" font-size="10" letter-spacing="0.2" fill="#000">D2</text>
<text x="509" y="529" font-family="Liberation Sans" font-size="10" letter-spacing="0.2" fill="#000">1N4148</text>
<text x="479" y="527" font-family="Liberation Sans" font-size="10" letter-spacing="0.2" fill="#000">D1</text>
<text x="561" y="530.5" font-family="Liberation Sans" font-size="10" letter-spacing="0.2" fill="#000">D3</text>
<text x="455.5" y="562" font-family="Liberation Sans" font-size="10" letter-spacing="0.2" fill="#000">1N4148</text>
<text x="562" y="566" font-family="Liberation Sans" font-size="10" letter-spacing="0.2" fill="#000">1N4148</text>
<text x="521" y="564" font-family="Liberation Sans" font-size="10" letter-spacing="0.2" fill="#000">D4</text>
<text x="509" y="592" font-family="Liberation Sans" font-size="10" letter-spacing="0.2" fill="#000">1N4148</text>
<text x="648" y="449.5" font-family="Liberation Sans" font-size="10" letter-spacing="0.2" fill="#000">K2 L4 L5 L6 1</text>
<text x="662" y="496.5" font-family="Liberation Sans" font-size="10" letter-spacing="0.2" fill="#000">L4</text>
<text x="656" y="515" font-family="Liberation Sans" font-size="10" letter-spacing="0.2" fill="#000">10µ</text>
<text x="662" y="574" font-family="Liberation Sans" font-size="10" letter-spacing="0.2" fill="#000">L5</text>
<text x="656" y="594" font-family="Liberation Sans" font-size="10" letter-spacing="0.2" fill="#000">10µ</text>
<text x="701" y="535" font-family="Liberation Sans" font-size="10" letter-spacing="0.2" fill="#000">L6</text>
<text x="695" y="553.5" font-family="Liberation Sans" font-size="10" letter-spacing="0.2" fill="#000">10µ</text>
<text x="754.5" y="533" font-family="Liberation Sans" font-size="10" letter-spacing="0.2" fill="#000">R3</text>
<text x="754.5" y="551" font-family="Liberation Sans" font-size="10" letter-spacing="0.2" fill="#000">50</text>
<text x="281" y="664.5" font-family="Liberation Sans" font-size="10" letter-spacing="0.2" fill="#000">.tran 0 50µ 0 100n</text>
<text x="436" y="656.5" font-family="Liberation Sans" font-size="10" letter-spacing="0.2" fill="#000">V2</text>
<text x="437" y="699.5" font-family="Liberation Sans" font-size="10" letter-spacing="0.2" fill="#000">SINE(0 1 50K)</text>
</svg>
<div style="position:absolute;left:976px;top:724px;width:47px;height:1px;background:#808080;"></div>
<div style="position:absolute;left:976px;top:724px;width:1px;height:15px;background:#808080;"></div>
<div style="position:absolute;left:976px;top:739px;width:47px;height:1px;background:#FFFFFF;"></div>
<div style="position:absolute;left:0px;top:741px;width:1024px;height:1px;background:#FFFFFF;"></div>
</body></html>
